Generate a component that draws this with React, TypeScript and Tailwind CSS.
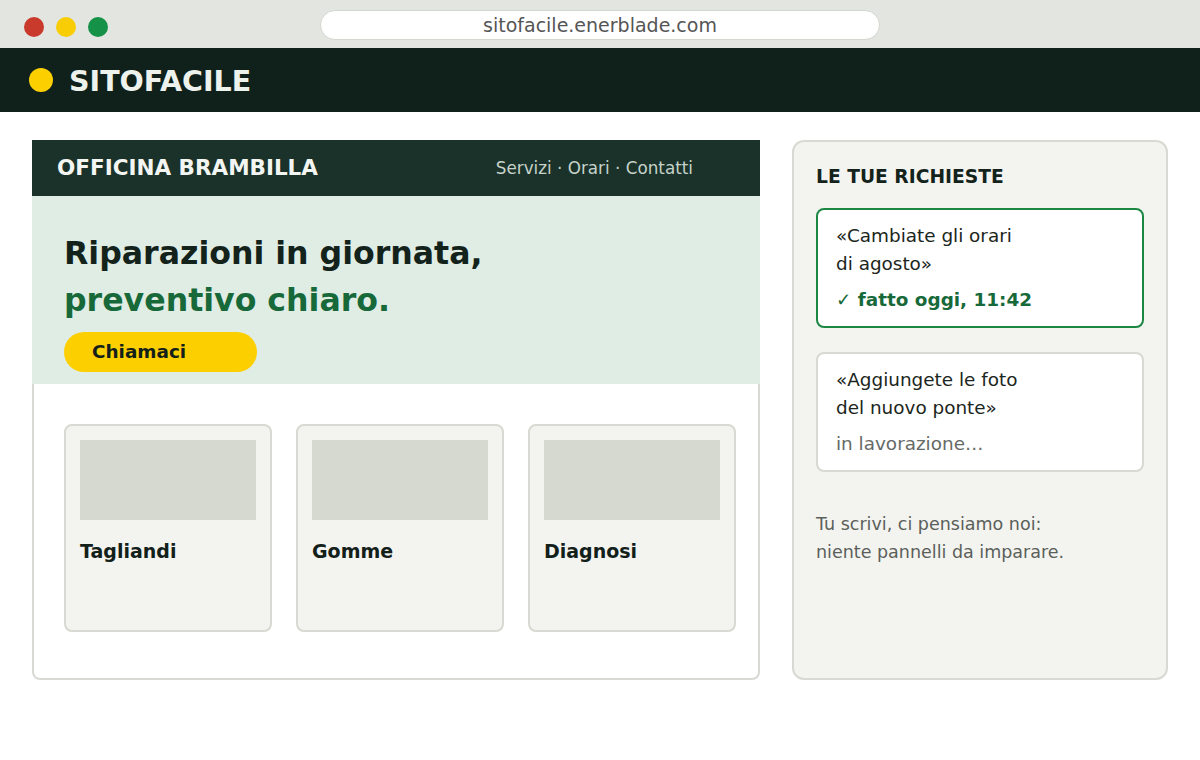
import React from "react";

function ServiceCard({ label }: { label: string }) {
  return (
    <div className="h-[208px] rounded-lg border-2 border-[#d8d9d3] bg-[#f3f4ef] p-[14px]">
      <div className="h-20 bg-[#d6d9d0]" />
      <div className="mt-[18px] text-[19px] font-bold leading-[27px] text-[#13201a]">{label}</div>
    </div>
  );
}

export default function App() {
  return (
    <div className="h-[760px] w-[1200px] overflow-hidden bg-white font-['DejaVu_Sans',sans-serif]">
      {/* browser chrome */}
      <div className="grid h-12 grid-cols-[1fr_560px_1fr] items-start bg-[#e3e6e0]">
        <div className="flex gap-3 pl-6 pt-[17px]">
          <span className="h-5 w-5 rounded-full bg-[#c9392c]" />
          <span className="h-5 w-5 rounded-full bg-[#f8cd06]" />
          <span className="h-5 w-5 rounded-full bg-[#169148]" />
        </div>
        <div className="mt-[10px] flex h-[30px] items-center justify-center rounded-full border border-[#d4d6d0] bg-white text-[19px] text-[#555]">
          sitofacile.enerblade.com
        </div>
        <div />
      </div>

      {/* app header */}
      <div className="flex h-16 items-center gap-[16px] bg-[#10211b] pl-[29px]">
        <span className="h-6 w-6 rounded-full bg-[#fccf00]" />
        <span className="mt-[5px] text-[28.5px] font-bold text-[#eef2ed]">SITOFACILE</span>
      </div>

      {/* main */}
      <div className="flex gap-8 px-8 pt-7">
        {/* site preview */}
        <div className="flex h-[540px] w-[728px] flex-col">
          <div className="flex h-14 items-center justify-between bg-[#1a3229] pl-[25px] pr-[67px]">
            <span className="text-[21.5px] font-bold text-[#f2f5f1]">OFFICINA BRAMBILLA</span>
            <span className="mt-[2px] text-[16.8px] text-[#c6d2ca]">Servizi · Orari · Contatti</span>
          </div>
          <div className="h-[188px] bg-[#e0ede4] px-8 pt-[34px]">
            <div className="text-[31.6px] font-bold leading-[47px] text-[#13231b]">
              Riparazioni in giornata,
              <br />
              <span className="text-[#17693a]">preventivo chiaro.</span>
            </div>
            <div className="mt-2 flex h-10 w-[193px] items-center rounded-full bg-[#fccf00] pl-7 text-[18.4px] font-bold text-[#13201a]">
              Chiamaci
            </div>
          </div>
          <div className="flex-1 rounded-b-lg border-2 border-t-0 border-[#d8d9d3] bg-white pl-[30px] pt-10">
            <div className="grid grid-cols-[repeat(3,208px)] gap-6">
              <ServiceCard label="Tagliandi" />
              <ServiceCard label="Gomme" />
              <ServiceCard label="Diagnosi" />
            </div>
          </div>
        </div>

        {/* requests panel */}
        <div className="h-[540px] w-[376px] rounded-xl border-2 border-[#d8d9d3] bg-[#f3f4ef] px-[22px] pt-[21px]">
          <div className="text-[18.7px] font-bold leading-[28px] text-[#13231b]">LE TUE RICHIESTE</div>
          <div className="mt-[17px] rounded-lg border-2 border-[#1b8743] bg-white px-[18px] pb-3 pt-3">
            <div className="text-[18.4px] leading-[28px] text-[#1b2620]">
              «Cambiate gli orari
              <br />
              di agosto»
            </div>
            <div className="mt-2 text-[18.4px] font-bold leading-[28px] text-[#17693a]">
              <span className="font-normal">✓</span> fatto oggi, 11:42
            </div>
          </div>
          <div className="mt-6 rounded-lg border-2 border-[#d8d9d3] bg-white px-[18px] pb-3 pt-3">
            <div className="text-[18.4px] leading-[28px] text-[#1b2620]">
              «Aggiungete le foto
              <br />
              del nuovo ponte»
            </div>
            <div className="mt-2 text-[18.4px] leading-[28px] text-[#666a66]">in lavorazione…</div>
          </div>
          <div className="mt-[38px] text-[17.5px] leading-[28px] text-[#5b5f5b]">
            Tu scrivi, ci pensiamo noi:
            <br />
            niente pannelli da imparare.
          </div>
        </div>
      </div>
    </div>
  );
}
